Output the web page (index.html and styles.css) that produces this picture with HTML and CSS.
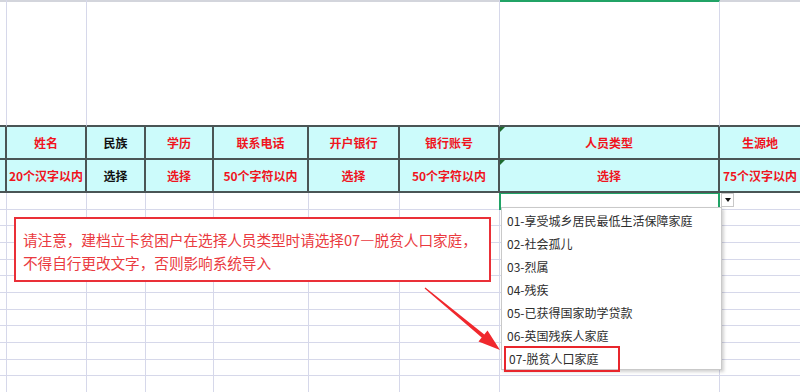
FILE: index.html
```html
<!DOCTYPE html>
<html lang="zh-CN">
<head>
<meta charset="utf-8">
<title>人员类型</title>
<link rel="stylesheet" href="styles.css">
</head>
<body>
<div class="page">
  <div class="sheet">
    <!-- top tall row -->
    <div class="c top"></div>
    <div class="c top"></div>
    <div class="c top span5"></div>
    <div class="c top sel-col"></div>
    <div class="c top last"></div>

    <!-- header row -->
    <div class="c h"></div>
    <div class="c h red">姓名</div>
    <div class="c h">民族</div>
    <div class="c h red">学历</div>
    <div class="c h red">联系电话</div>
    <div class="c h red">开户银行</div>
    <div class="c h red">银行账号</div>
    <div class="c h red mark">人员类型</div>
    <div class="c h red last">生源地</div>

    <!-- hint row -->
    <div class="c h"></div>
    <div class="c h red">20个汉字以内</div>
    <div class="c h">选择</div>
    <div class="c h red">选择</div>
    <div class="c h red">50个字符以内</div>
    <div class="c h red">选择</div>
    <div class="c h red">50个字符以内</div>
    <div class="c h red mark">选择</div>
    <div class="c h red last">75个汉字以内</div>

    <!-- data rows -->
    <div class="c d"></div><div class="c d"></div><div class="c d"></div><div class="c d"></div><div class="c d"></div><div class="c d"></div><div class="c d"></div><div class="c d active"></div><div class="c d last"></div>
    <div class="c d"></div><div class="c d"></div><div class="c d"></div><div class="c d"></div><div class="c d"></div><div class="c d"></div><div class="c d"></div><div class="c d"></div><div class="c d last"></div>
    <div class="c d"></div><div class="c d"></div><div class="c d"></div><div class="c d"></div><div class="c d"></div><div class="c d"></div><div class="c d"></div><div class="c d"></div><div class="c d last"></div>
    <div class="c d"></div><div class="c d"></div><div class="c d"></div><div class="c d"></div><div class="c d"></div><div class="c d"></div><div class="c d"></div><div class="c d"></div><div class="c d last"></div>
    <div class="c d"></div><div class="c d"></div><div class="c d"></div><div class="c d"></div><div class="c d"></div><div class="c d"></div><div class="c d"></div><div class="c d"></div><div class="c d last"></div>
    <div class="c d"></div><div class="c d"></div><div class="c d"></div><div class="c d"></div><div class="c d"></div><div class="c d"></div><div class="c d"></div><div class="c d"></div><div class="c d last"></div>
    <div class="c d"></div><div class="c d"></div><div class="c d"></div><div class="c d"></div><div class="c d"></div><div class="c d"></div><div class="c d"></div><div class="c d"></div><div class="c d last"></div>
    <div class="c d"></div><div class="c d"></div><div class="c d"></div><div class="c d"></div><div class="c d"></div><div class="c d"></div><div class="c d"></div><div class="c d"></div><div class="c d last"></div>
    <div class="c d"></div><div class="c d"></div><div class="c d"></div><div class="c d"></div><div class="c d"></div><div class="c d"></div><div class="c d"></div><div class="c d"></div><div class="c d last"></div>
    <div class="c d"></div><div class="c d"></div><div class="c d"></div><div class="c d"></div><div class="c d"></div><div class="c d"></div><div class="c d"></div><div class="c d"></div><div class="c d last"></div>
    <div class="c d"></div><div class="c d"></div><div class="c d"></div><div class="c d"></div><div class="c d"></div><div class="c d"></div><div class="c d"></div><div class="c d"></div><div class="c d last"></div>
    <div class="c d"></div><div class="c d"></div><div class="c d"></div><div class="c d"></div><div class="c d"></div><div class="c d"></div><div class="c d"></div><div class="c d"></div><div class="c d last"></div>
  </div>

  <!-- dropdown button -->
  <div class="dd-btn"><span class="tri"></span></div>

  <!-- dropdown list -->
  <ul class="dd-list">
    <li>01-享受城乡居民最低生活保障家庭</li>
    <li>02-社会孤儿</li>
    <li>03-烈属</li>
    <li>04-残疾</li>
    <li>05-已获得国家助学贷款</li>
    <li>06-英国残疾人家庭</li>
    <li class="hl">07-脱贫人口家庭</li>
  </ul>

  <!-- note -->
  <div class="note">请注意，建档立卡贫困户在选择人员类型时请选择07—脱贫人口家庭，<br>不得自行更改文字，否则影响系统导入</div>

  <!-- arrow -->
  <svg class="arrow" width="85" height="72" viewBox="0 0 85 72">
    <polygon points="5.4,4.5 64.3,51.5 67.5,47.6 80,67 58.5,58.4 61.7,54.5 4.6,5.5" fill="#f0282d"/>
  </svg>
</div>
</body>
</html>
```

FILE: styles.css
```css
* { box-sizing: border-box; }
html, body { margin: 0; padding: 0; background: #fff; }
body {
  font-family: "Noto Sans CJK SC", "Noto Sans", sans-serif;
  width: 800px;
  height: 392px;
  overflow: hidden;
}
.page {
  position: relative;
  width: 800px;
  height: 392px;
}
.sheet {
  display: grid;
  grid-template-columns: 7px 80px 59px 68px 95px 91px 100px 220px 80px;
  grid-template-rows: 125px 33px 33px repeat(12, 16.667px);
  border-top: 2px solid #d3d5dc;
}
.c {
  border-right: 1px solid #d6d8ea;
  border-bottom: 1px solid #d6d8ea;
}
.c.last { border-right: none; }
.top {
  border-bottom: 2px solid #4a5555;
  margin-top: -2px;
}
.span5 { grid-column: span 5; }
.sel-col { border-top: 2px solid #21a366; }
.h {
  background: #ccfbfb;
  border-right: 2px solid #4a5555;
  border-bottom: 2px solid #4a5555;
  display: flex;
  align-items: center;
  justify-content: center;
  font-size: 12px;
  font-weight: 700;
  color: #111;
  white-space: nowrap;
  position: relative;
}
.h.last { border-right: none; }
.h.red { color: #f0141e; }
.mark::before {
  content: "";
  position: absolute;
  left: 0;
  top: 0;
  border-top: 5px solid #1d6b2e;
  border-right: 5px solid transparent;
}
.active {
  border: 2px solid #21a366;
  margin-left: -1px;
  margin-top: -1px;
}

.dd-btn {
  position: absolute;
  left: 721px;
  top: 193px;
  width: 13px;
  height: 14px;
  background: #fff;
  border: 1px solid #c8c8c8;
  display: flex;
  align-items: center;
  justify-content: center;
}
.tri {
  border-top: 4px solid #111;
  border-left: 3.5px solid transparent;
  border-right: 3.5px solid transparent;
}

.dd-list {
  position: absolute;
  left: 501px;
  top: 207px;
  width: 221px;
  height: 163px;
  margin: 0;
  padding: 1px 0 0 0;
  list-style: none;
  background: #fff;
  border: 1px solid #c9c9c9;
  box-shadow: 2px 2px 3px rgba(0, 0, 0, 0.18);
}
.dd-list li {
  height: 23px;
  line-height: 23px;
  padding-left: 5px;
  font-size: 12px;
  color: #2d2d2d;
  white-space: nowrap;
}
.dd-list li.hl {
  width: 116px;
  margin-left: 2px;
  padding-left: 3px;
  border: 2px solid #e8262c;
  line-height: 21px;
  height: 26px;
  margin-top: -1px;
}

.note {
  position: absolute;
  left: 14px;
  top: 217px;
  width: 477px;
  height: 65px;
  border: 2px solid #ea3038;
  background: #fff;
  padding: 9px 0 0 7px;
  font-size: 14.7px;
  letter-spacing: -0.1px;
  line-height: 23px;
  color: #ea3a40;
  white-space: nowrap;
}

.arrow {
  position: absolute;
  left: 420px;
  top: 283px;
}
```
